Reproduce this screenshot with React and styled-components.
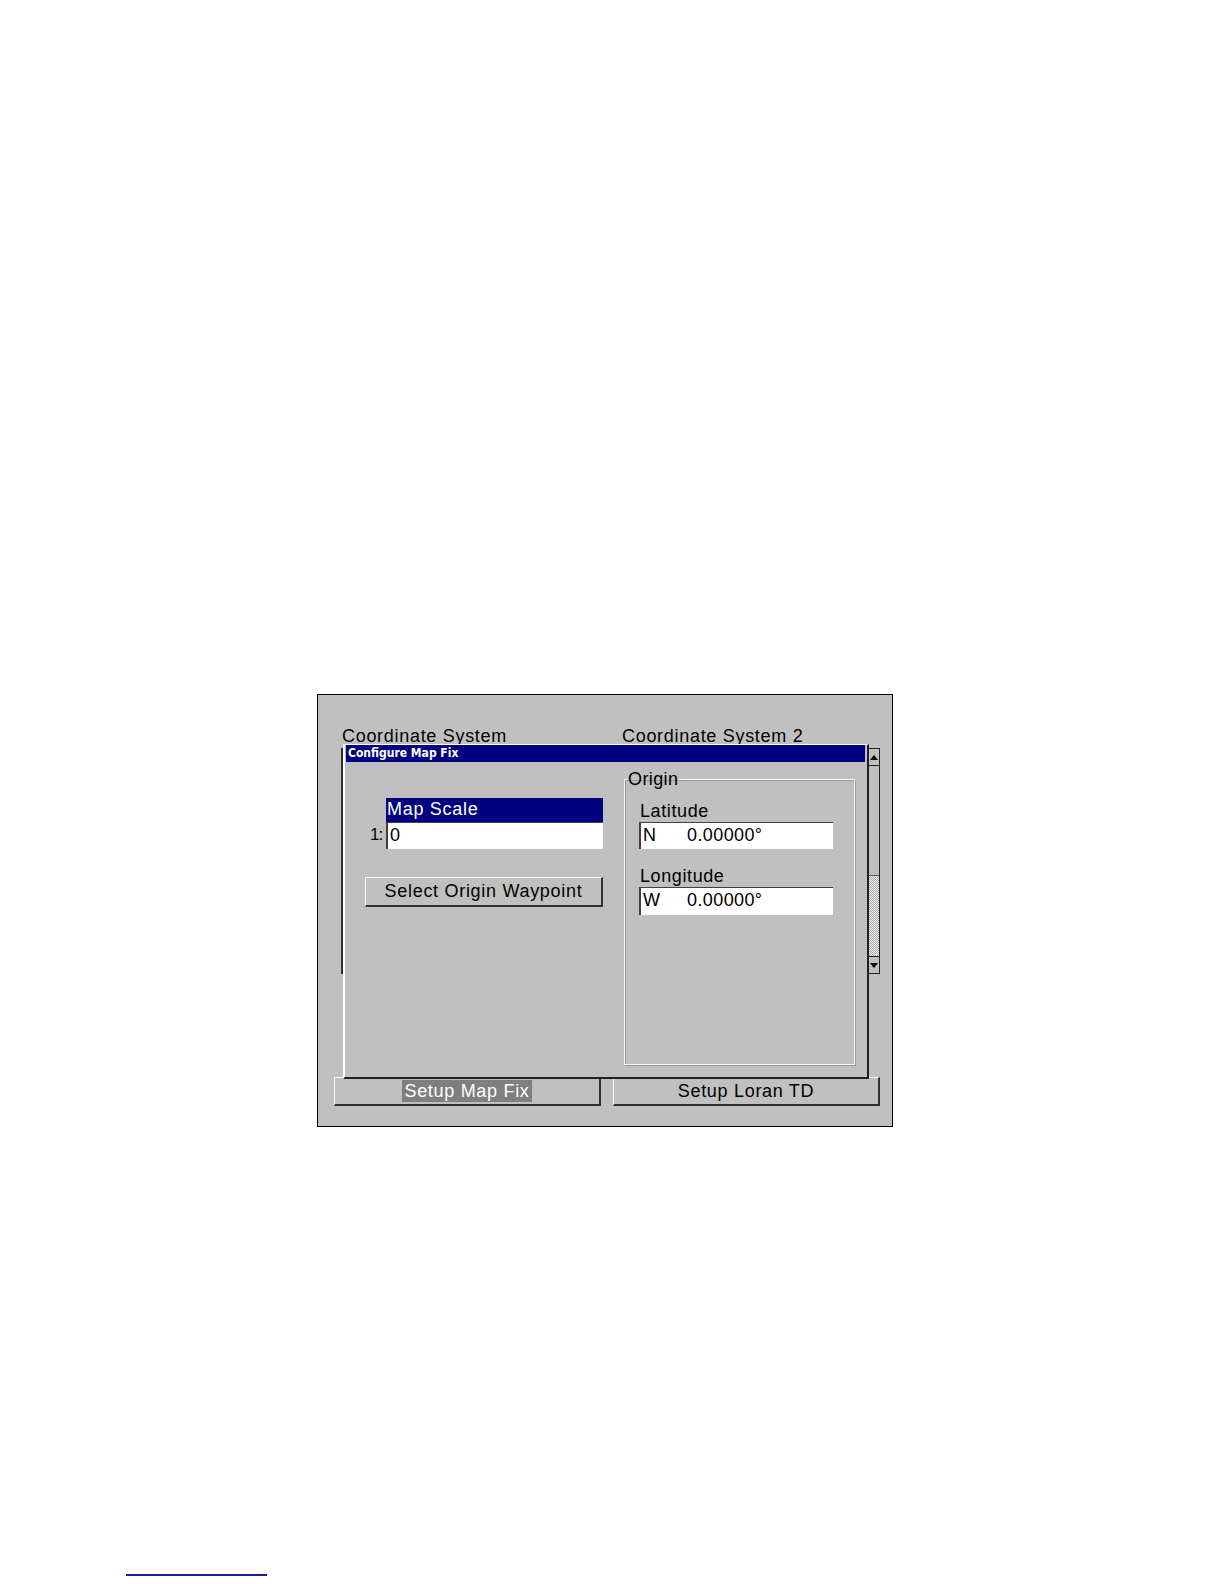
import styled, { createGlobalStyle } from "styled-components";

const Global = createGlobalStyle`
  html, body { margin: 0; padding: 0; background: #fff; }
  * { box-sizing: border-box; }
  body { font-family: "Liberation Sans", Arial, sans-serif; }
`;

const Page = styled.div`
  padding-top: 694px;
  display: flex;
  flex-direction: column;
`;

const Screen = styled.div`
  position: relative;
  margin-left: 317px;
  width: 576px;
  height: 433px;
  border: 1px solid #000;
  background: #c0c0c0;
  padding: 30px 12px 0 15px;
  display: flex;
  flex-direction: column;
`;

const Labels = styled.div`
  display: flex;
  padding-left: 9px;
  font-size: 18px;
  line-height: 22px;
  letter-spacing: 0.7px;
  color: #000;
  & > span {
    width: 280px;
    flex-shrink: 0;
  }
`;

const ListBox = styled.div`
  margin: 1px 0 0 8px;
  height: 226px;
  display: flex;
  border-left: 2px solid #303030;
`;

const ListArea = styled.div`
  flex: 1;
`;

const Scroll = styled.div`
  width: 14px;
  display: flex;
  flex-direction: column;
  border: 1px solid #202020;
  border-left-width: 2px;
  background: #c0c0c0;
`;

const Arrow = styled.div`
  height: 17px;
  display: flex;
  align-items: center;
  justify-content: center;
  border-${(p) => (p.$down ? "top" : "bottom")}: 1px solid #202020;
  &::after {
    content: "";
    border-left: 4px solid transparent;
    border-right: 4px solid transparent;
    border-${(p) => (p.$down ? "top" : "bottom")}: 5px solid #000;
  }
`;

const Thumb = styled.div`
  height: 110px;
  border-bottom: 1px solid #606060;
`;

const Track = styled.div`
  flex: 1;
  background: repeating-conic-gradient(#f0f0f0 0 25%, #a8a8a8 0 50%) 0 0 / 2px 2px;
`;

const Buttons = styled.div`
  margin-top: 103px;
  display: flex;
  gap: 12px;
  padding-left: 1px;
`;

const Button = styled.div`
  width: ${(p) => p.$w || 268}px;
  height: ${(p) => p.$h || 29}px;
  margin-top: ${(p) => p.$mt || 0}px;
  border-top: 1px solid #fff;
  border-left: 1px solid #fff;
  border-right: 2px solid #303030;
  border-bottom: 2px solid #303030;
  display: flex;
  align-items: center;
  justify-content: center;
  font-size: 18px;
  letter-spacing: 0.7px;
  color: #000;
`;

const Focus = styled.span`
  background: #7f7f7f;
  color: #fff;
  padding: 0 2px;
  line-height: 22px;
`;

const Dialog = styled.div`
  position: absolute;
  left: 25px;
  top: 49px;
  width: 526px;
  height: 335px;
  background: #c0c0c0;
  border-top: 1px solid #fff;
  border-left: 2px solid #fff;
  border-right: 2px solid #202020;
  border-bottom: 2px solid #202020;
  padding: 0 2px 0 1px;
  display: flex;
  flex-direction: column;
`;

const TitleBar = styled.div`
  height: 17px;
  background: #000080;
  color: #fff;
  font-size: 12px;
  font-weight: bold;
  line-height: 17px;
  padding-left: 2px;
  font-family: "Liberation Sans Narrow", "DejaVu Sans Condensed", "Liberation Sans", sans-serif;
`;

const Body = styled.div`
  display: flex;
  padding-left: 19px;
`;

const LeftCol = styled.div`
  width: 238px;
  margin-top: 36px;
  display: flex;
  flex-direction: column;
`;

const ScaleRow = styled.div`
  display: flex;
  flex-direction: column;
  padding-left: 21px;
  position: relative;
`;

const Heading = styled.div`
  height: 24px;
  background: #000080;
  color: #fff;
  font-size: 18px;
  line-height: 22px;
  letter-spacing: 0.7px;
  padding-left: 1px;
`;

const Prefix = styled.span`
  position: absolute;
  left: 5px;
  top: 27px;
  font-size: 17px;
  letter-spacing: -1px;
`;

const Field = styled.div`
  width: ${(p) => p.$w || 217}px;
  height: ${(p) => p.$h || 27}px;
  background: #fff;
  border-top: 1px solid #404040;
  border-left: 2px solid #404040;
  font-size: 18px;
  line-height: 24px;
  letter-spacing: 0.4px;
  padding-left: 2px;
  display: flex;
  color: #000;
  & > b {
    font-weight: normal;
    width: 44px;
  }
`;

const Group = styled.fieldset`
  margin: 7px 0 0 21px;
  width: 231px;
  height: 296px;
  padding: 11px 0 0 14px;
  border: 1px solid #f4f4f4;
  box-shadow: inset 1px 1px 0 #9a9a9a, 1px 1px 0 #9a9a9a;
  min-width: 0;
  & > legend {
    padding: 0;
    margin-left: -11px;
    font-size: 18px;
    line-height: 20px;
    letter-spacing: 0.4px;
  }
`;

const Label = styled.div`
  font-size: 18px;
  line-height: 22px;
  letter-spacing: 0.6px;
  padding-left: 1px;
  margin-top: ${(p) => p.$mt || 0}px;
`;

const Footer = styled.div`
  margin: 447px 0 0 126px;
  width: 141px;
  height: 2px;
  background: #1c1c9c;
`;

export default function App() {
  return (
    <Page>
      <Global />
      <Screen>
        <Labels>
          <span>Coordinate System</span>
          <span>Coordinate System 2</span>
        </Labels>
        <ListBox>
          <ListArea />
          <Scroll>
            <Arrow />
            <Thumb />
            <Track />
            <Arrow $down />
          </Scroll>
        </ListBox>
        <Buttons>
          <Button>
            <Focus>Setup Map Fix</Focus>
          </Button>
          <Button>Setup Loran TD</Button>
        </Buttons>

        <Dialog>
          <TitleBar>Configure Map Fix</TitleBar>
          <Body>
            <LeftCol>
              <ScaleRow>
                <Heading>Map Scale</Heading>
                <Prefix>1:</Prefix>
                <Field>0</Field>
              </ScaleRow>
              <Button $w={238} $h={30} $mt={28}>
                Select Origin Waypoint
              </Button>
            </LeftCol>
            <Group>
              <legend>Origin</legend>
              <Label>Latitude</Label>
              <Field $w={194}>
                <b>N</b>0.00000°
              </Field>
              <Label $mt={16}>Longitude</Label>
              <Field $w={194} $h={28}>
                <b>W</b>0.00000°
              </Field>
            </Group>
          </Body>
        </Dialog>
      </Screen>
      <Footer />
    </Page>
  );
}
